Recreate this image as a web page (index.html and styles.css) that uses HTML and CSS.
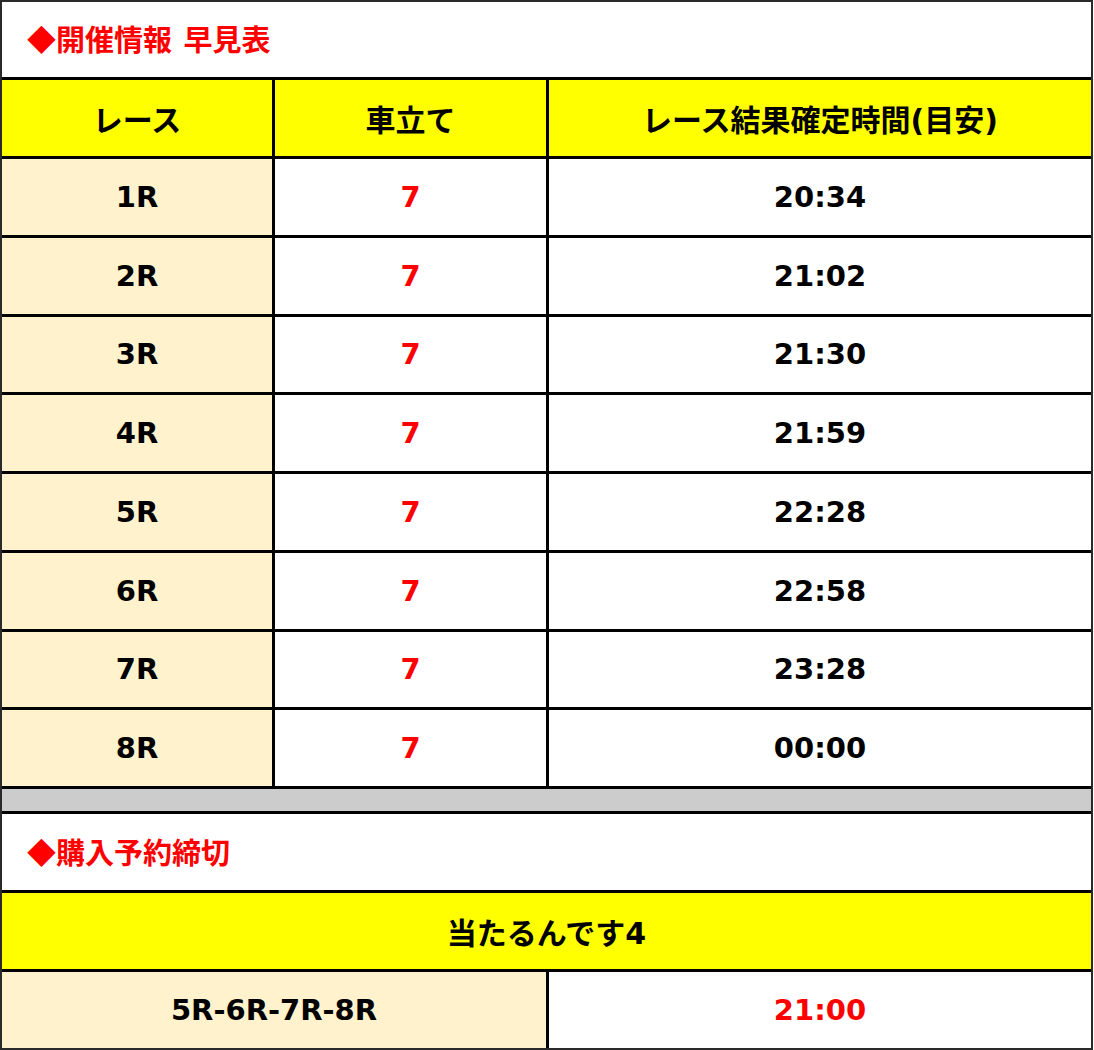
FILE: index.html
```html
<!DOCTYPE html>
<html lang="ja">
<head>
<meta charset="utf-8">
<title>開催情報 早見表</title>
<link rel="stylesheet" href="styles.css">
</head>
<body>
<div class="sheet">
  <div class="cell title span3">◆開催情報 早見表</div>

  <div class="cell head">レース</div>
  <div class="cell head">車立て</div>
  <div class="cell head">レース結果確定時間(目安)</div>

  <div class="cell race">1R</div><div class="cell num">7</div><div class="cell time">20:34</div>
  <div class="cell race">2R</div><div class="cell num">7</div><div class="cell time">21:02</div>
  <div class="cell race">3R</div><div class="cell num">7</div><div class="cell time">21:30</div>
  <div class="cell race">4R</div><div class="cell num">7</div><div class="cell time">21:59</div>
  <div class="cell race">5R</div><div class="cell num">7</div><div class="cell time">22:28</div>
  <div class="cell race">6R</div><div class="cell num">7</div><div class="cell time">22:58</div>
  <div class="cell race">7R</div><div class="cell num">7</div><div class="cell time">23:28</div>
  <div class="cell race">8R</div><div class="cell num">7</div><div class="cell time">00:00</div>

  <div class="cell gap span3"></div>

  <div class="cell title span3">◆購入予約締切</div>

  <div class="cell head span3">当たるんです4</div>

  <div class="cell race span2">5R-6R-7R-8R</div>
  <div class="cell num">21:00</div>
</div>
</body>
</html>
```

FILE: styles.css
```css
html, body {
  margin: 0;
  padding: 0;
  background: #ffffff;
}

.sheet {
  box-sizing: border-box;
  width: 1093px;
  display: grid;
  grid-template-columns: 270px 271px 542px;
  grid-template-rows: 75px 76px repeat(8, 75.75px) 22px 76px 76px 76px;
  gap: 3px;
  background: #000000;
  border: 2px solid #2a2a2a;
  font-family: "DejaVu Sans", "Noto Sans CJK JP", sans-serif;
  font-weight: bold;
  font-size: 29px;
  color: #000000;
}

.cell {
  display: flex;
  align-items: center;
  justify-content: center;
  background: #ffffff;
  white-space: nowrap;
}

.span3 { grid-column: 1 / 4; }
.span2 { grid-column: 1 / 3; }

.title {
  justify-content: flex-start;
  padding-left: 25px;
  padding-bottom: 3px;
  color: #ff0000;
  font-family: "Noto Sans CJK JP", sans-serif;
  word-spacing: 5px;
}

.head {
  background: #ffff00;
  font-size: 30px;
}

.race {
  background: #fff2cc;
}

.num {
  color: #ff0000;
}

.gap {
  background: #cccccc;
}
```
